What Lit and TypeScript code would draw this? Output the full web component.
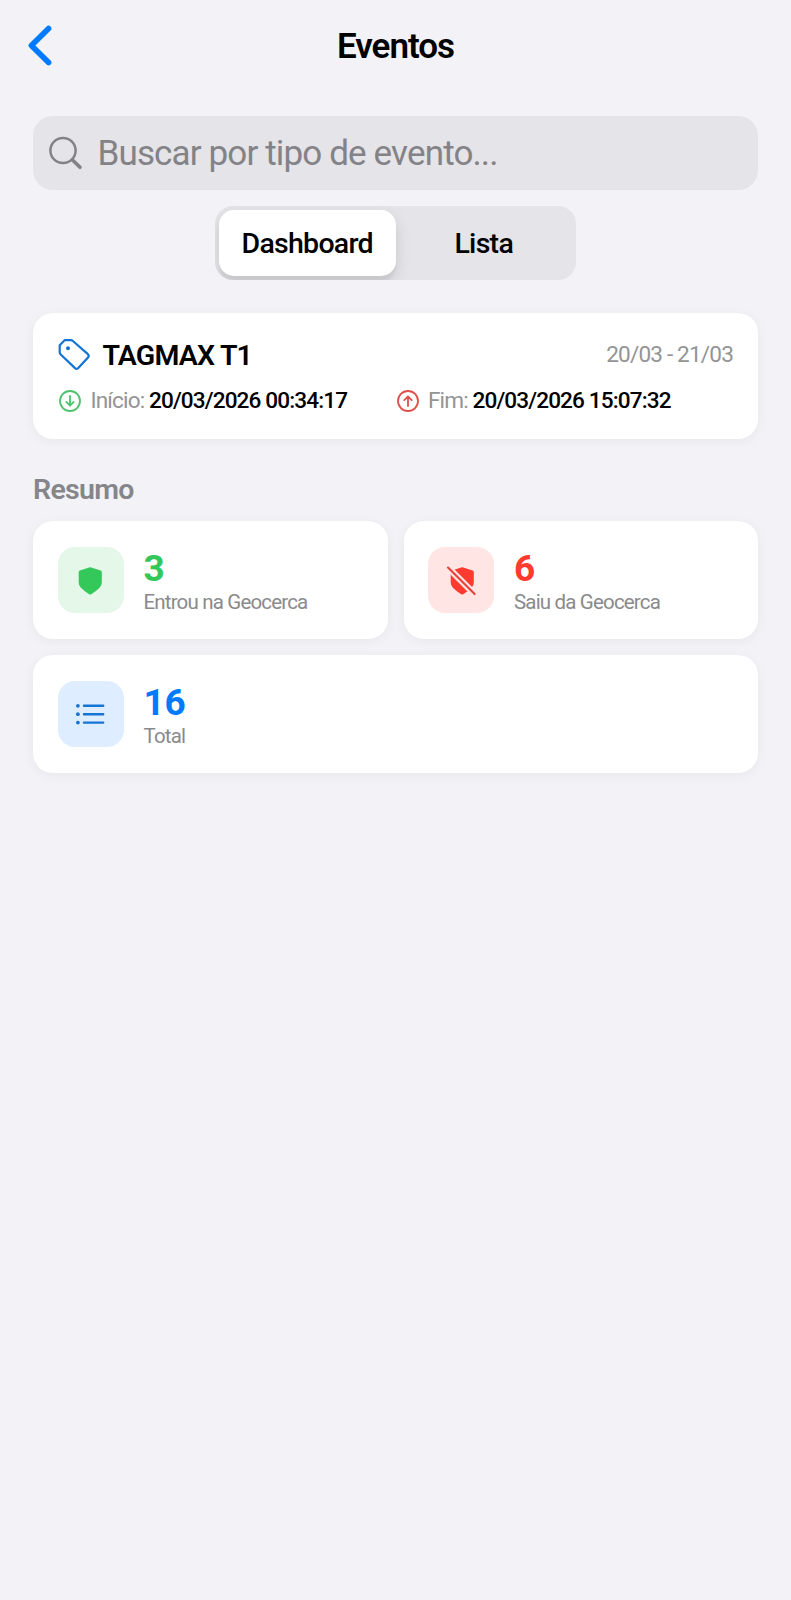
import { LitElement, html, css, svg } from "lit";
import { customElement, property } from "lit/decorators.js";

const shieldPath = "M13.2 1.5Q14.2 1.1 15.2 1.5L24.6 4.6Q25.8 5 25.8 6.2V16.6Q25.8 19.4 23.8 21.6 20.5 25.2 15.2 28.2 14.2 28.8 13.2 28.2 8 25.2 4.7 21.6 2.7 19.4 2.7 16.6V6.2Q2.7 5 3.9 4.6Z";
const shield = svg`<path fill="#34c759" d=${shieldPath} />`;
const shieldOff = svg`<path transform="translate(1 0)" fill="#ff3b30" d=${shieldPath} /><path d="M0 .5 28.5 29" stroke="#ffe6e4" stroke-width="6.6"/><path d="M1 1.5 27.6 28.1" stroke="#e8403a" stroke-width="2.1" stroke-linecap="round"/>`;
const list = svg`<g stroke="#1474d4" stroke-width="2.4" stroke-linecap="round"><path d="M8 5.8H27.2M8 14.2H27.2M8 22.6H27.2"/><g stroke="none" fill="#1474d4"><circle cx="1.9" cy="5.8" r="1.9"/><circle cx="1.9" cy="14.2" r="1.9"/><circle cx="1.9" cy="22.6" r="1.9"/></g></g>`;

@customElement("summary-card")
export class SummaryCard extends LitElement {
  @property() tone = "blue";
  @property() value = "";
  @property() label = "";

  static styles = css`
    :host {
      display: flex;
      align-items: center;
      box-sizing: border-box;
      height: 118px;
      padding: 0 24.5px;
      gap: 20px;
      border-radius: 20px;
      background: #fff;
      box-shadow: 0 2px 12px rgba(0, 0, 0, 0.05);
    }
    .tile {
      display: grid;
      place-items: center;
      width: 66px;
      height: 66px;
      border-radius: 17px;
    }
    .tile svg { width: 29px; height: 29px; overflow: visible; }
    .tile.green { background: #e4f7e9; }
    .tile.red { background: #ffe6e4; }
    .tile.blue { background: #deedff; }
    .text { padding-top: 3px; }
    .value { font-size: 37px; line-height: 40px; font-weight: 700; letter-spacing: -0.3px; }
    .value.green { color: #34c759; }
    .value.red { color: #ff3b30; }
    .value.blue { color: #007aff; }
    .label { font-size: 20.5px; line-height: 26px; letter-spacing: -0.83px; color: #8a8a8c; }
  `;

  render() {
    const icon = this.tone === "green" ? shield : this.tone === "red" ? shieldOff : list;
    return html`
      <div class="tile ${this.tone}"><svg viewBox="0 0 29 29" fill="none">${icon}</svg></div>
      <div class="text">
        <div class="value ${this.tone}">${this.value}</div>
        <div class="label">${this.label}</div>
      </div>
    `;
  }
}

@customElement("app-root")
export class AppRoot extends LitElement {
  static styles = css`
    :host {
      display: block;
      box-sizing: border-box;
      min-height: 1600px;
      background: #f2f2f7;
      color: #000;
      font-family: Roboto, sans-serif;
    }
    header {
      display: grid;
      grid-template-columns: 80px 1fr 80px;
      align-items: center;
      height: 92px;
    }
    .back { width: 26px; height: 42px; margin-left: 27px; }
    h1 {
      margin: 0;
      text-align: center;
      font-size: 35px;
      line-height: 41px;
      font-weight: 600;
      letter-spacing: -1.05px;
    }
    main { padding: 23.5px 33px 0; }
    .search {
      display: flex;
      align-items: center;
      height: 74.5px;
      padding-left: 15px;
      gap: 13.5px;
      border-radius: 20px;
      background: #e4e4e9;
      color: #838387;
      font-size: 35px;
      line-height: 41px;
      letter-spacing: -0.86px;
    }
    .search span { padding-top: 1px; }
    .search svg { width: 36px; height: 36px; }
    .segments {
      display: grid;
      grid-template-columns: 1fr 1fr;
      box-sizing: border-box;
      width: 361px;
      height: 74px;
      margin: 16px auto 33px;
      padding: 4px;
      border-radius: 18px;
      background: #e4e4e9;
      overflow: hidden;
      font-size: 28.5px;
      font-weight: 500;
      letter-spacing: -0.72px;
    }
    .segment {
      display: flex;
      align-items: center;
      justify-content: center;
      padding-top: 1px;
      border-radius: 15px;
    }
    .active {
      background: #fff;
      box-shadow: 0 6px 16px rgba(0, 0, 0, 0.12), 0 6px 2px rgba(0, 0, 0, 0.04);
    }
    .device {
      box-sizing: border-box;
      height: 126px;
      padding: 25px 25px 0;
      border-radius: 20px;
      background: #fff;
      box-shadow: 0 2px 12px rgba(0, 0, 0, 0.05);
    }
    .title { display: flex; align-items: center; height: 33px; }
    .tag { width: 33px; height: 33px; margin-right: 11.5px; }
    .name { padding-top: 1px; font-size: 28.5px; font-weight: 600; letter-spacing: -0.8px; }
    .range { margin-left: auto; font-size: 22.6px; color: #949496; letter-spacing: -0.84px; }
    .times {
      display: grid;
      grid-template-columns: 1fr 1fr;
      margin-top: 16.5px;
      font-size: 22.6px;
      line-height: 26px;
      letter-spacing: -0.88px;
    }
    .time { display: flex; align-items: center; white-space: pre; }
    .time svg { width: 24px; height: 24px; margin-right: 8.5px; }
    .muted { color: #949496; }
    .time b { font-weight: 500; }
    h2 {
      margin: 34px 0 14px;
      font-size: 28.5px;
      line-height: 34px;
      font-weight: 600;
      letter-spacing: -0.7px;
      color: #85858a;
    }
    .cards { display: grid; grid-template-columns: 1fr 1fr; gap: 16px; }
    .wide { grid-column: 1 / -1; }
  `;

  render() {
    return html`
      <header>
        <svg class="back" viewBox="0 0 26 42" fill="none" stroke="#007aff" stroke-width="5.6" stroke-linecap="round" stroke-linejoin="round">
          <path d="M21.6 3.4 4.4 20.4 21.6 37.6" />
        </svg>
        <h1>Eventos</h1>
      </header>
      <main>
        <div class="search">
          <svg viewBox="0 0 36 36" fill="none" stroke="#838387" stroke-linecap="round">
            <circle cx="15" cy="15.5" r="12.6" stroke-width="2.5" />
            <path d="M24.5 25 32 32.3" stroke-width="3.6" />
          </svg>
          <span>Buscar por tipo de evento...</span>
        </div>
        <div class="segments">
          <div class="segment active">Dashboard</div>
          <div class="segment">Lista</div>
        </div>
        <section class="device">
          <div class="title">
            <svg class="tag" viewBox="0 0 33 33" fill="none" stroke="#1474d4" stroke-width="2.2" stroke-linejoin="round">
              <path d="M6.6 2.2H12.8Q14 2.2 14.9 3L29.9 16.2Q31.5 17.7 30 19.4L20.3 30Q18.7 31.6 17 30.1L3 16.8Q1.7 15.6 1.7 14V7.2Z" />
              <circle cx="10" cy="10.2" r="2" fill="#1474d4" stroke="none" />
            </svg>
            <span class="name">TAGMAX T1</span>
            <span class="range">20/03 - 21/03</span>
          </div>
          <div class="times">
            <div class="time">
              <svg viewBox="0 0 24 24" fill="none" stroke="#4cc36c" stroke-width="1.8" stroke-linecap="round" stroke-linejoin="round">
                <circle cx="12" cy="12" r="10" />
                <path d="M12 7V16.4M8.3 12.9 12 16.6 15.7 12.9" />
              </svg><span class="muted">Início: </span><b>20/03/2026 00:34:17</b>
            </div>
            <div class="time">
              <svg viewBox="0 0 24 24" fill="none" stroke="#e0504a" stroke-width="1.8" stroke-linecap="round" stroke-linejoin="round">
                <circle cx="12" cy="12" r="10" />
                <path d="M12 17V7.6M8.3 11.1 12 7.4 15.7 11.1" />
              </svg><span class="muted">Fim: </span><b>20/03/2026 15:07:32</b>
            </div>
          </div>
        </section>
        <h2>Resumo</h2>
        <div class="cards">
          <summary-card tone="green" value="3" label="Entrou na Geocerca"></summary-card>
          <summary-card tone="red" value="6" label="Saiu da Geocerca"></summary-card>
          <summary-card class="wide" tone="blue" value="16" label="Total"></summary-card>
        </div>
      </main>
    `;
  }
}
